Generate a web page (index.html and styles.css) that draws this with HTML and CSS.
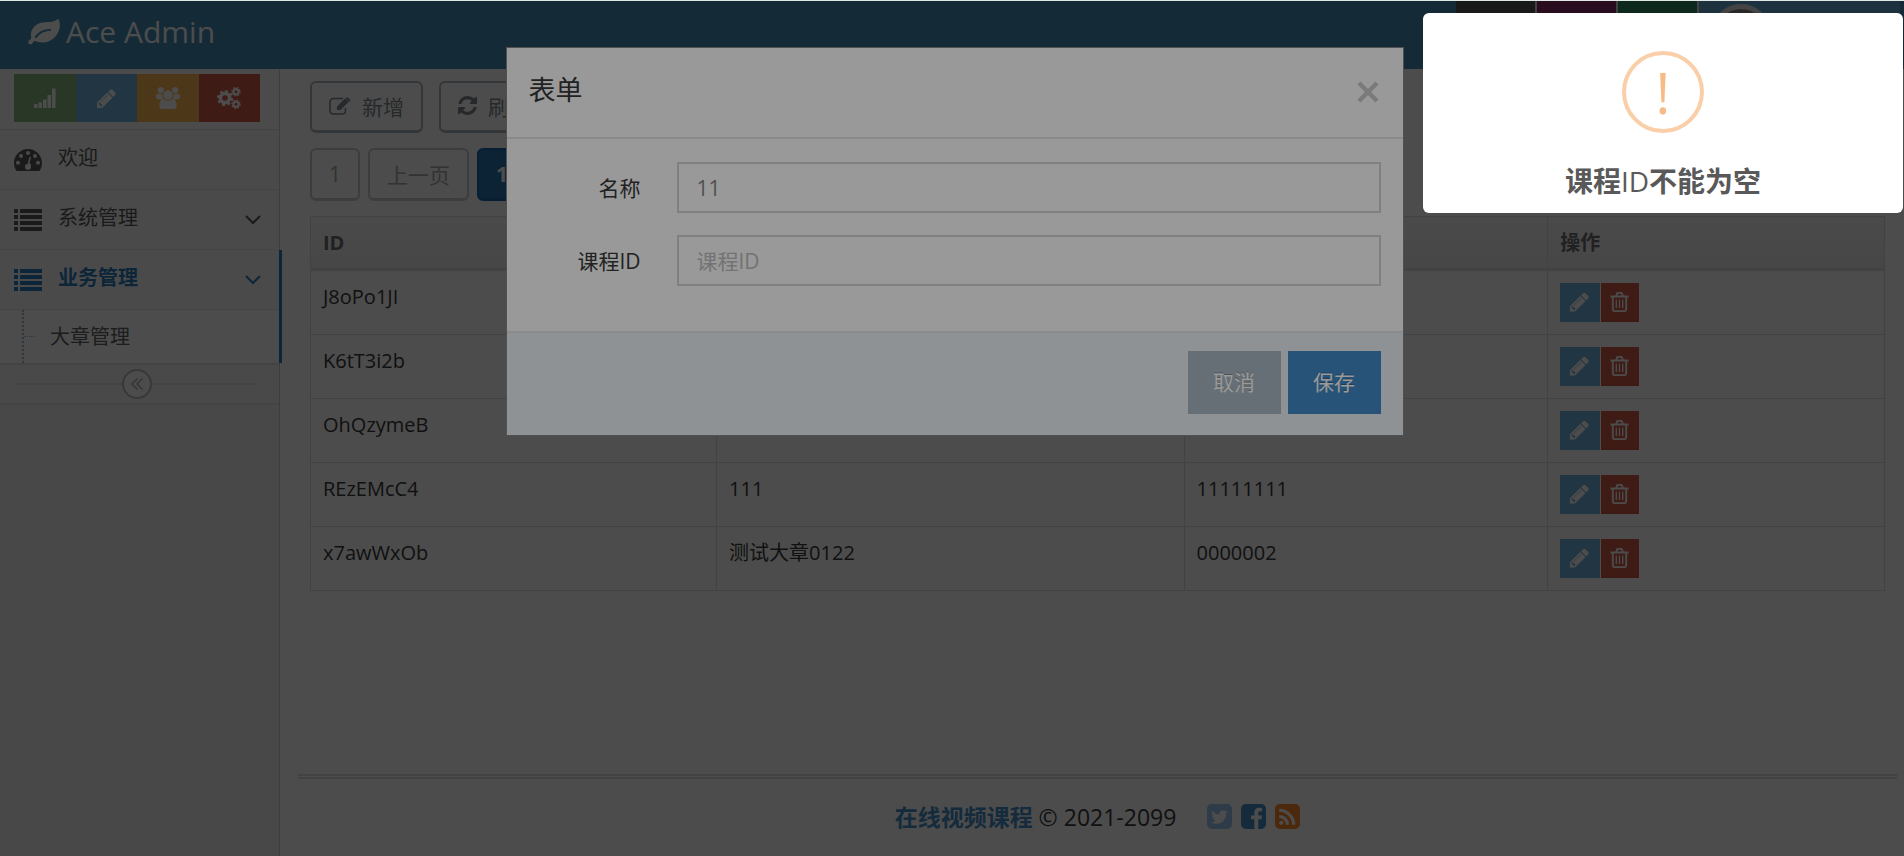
FILE: index.html
```html
<!DOCTYPE html>
<html lang="zh-CN">
<head>
  <meta charset="utf-8">
  <title>Ace Admin</title>
  <link rel="stylesheet" href="styles.css">
</head>
<body>
  <!-- 图标库 -->
  <svg class="sprite" aria-hidden="true">
    <symbol id="i-leaf" viewBox="0 0 32 26">
      <path fill="currentColor" fill-rule="evenodd" d="M30.500 0.300C31.300 1 32 4 31.800 7C31.200 16 24 23.700 14 23.500C10.500 23.500 8.500 22.300 6.500 22C5 22.500 4.500 25.500 2.500 25.500C1 25.500 0 24 0.200 23C0.500 21 3.500 20.500 3.300 18.500C1.500 12 6 5.500 13 3.700C18 2.500 23 3.700 27 1.700C28.500 1 29.500-0.300 30.500 0.300ZM22 10C15 10 11 13 7 17.300C6.300 18.300 7.500 19.500 8.500 18.700C13 14 16 12.200 22 12.100C23.400 12 23.400 10.100 22 10Z"/>
    </symbol>
    <symbol id="i-signal" viewBox="0 0 24 22">
      <path fill="currentColor" d="M1 17h3.500v4H1zM5.500 15.500H9V21H5.500zM10 12.500h3.500V21H10zM14.500 8H18v13h-3.500zM19 1.500h3.500V21H19z"/>
    </symbol>
    <symbol id="i-pencil" viewBox="0 0 1536 1536">
      <path fill="currentColor" transform="translate(0 1408) scale(1 -1)" d="M363 0l91 91l-235 235l-91 -91v-107h128v-128h107zM886 928q0 22 -22 22q-10 0 -17 -7l-542 -542q-7 -7 -7 -17q0 -22 22 -22q10 0 17 7l542 542q7 7 7 17zM832 1120l416 -416l-832 -832h-416v416zM1515 1024q0 -53 -37 -90l-166 -166l-416 416l166 165q36 38 90 38q53 0 91 -38l235 -234q37 -39 37 -91z"/>
    </symbol>
    <symbol id="i-group" viewBox="0 0 24 22">
      <g fill="currentColor">
        <circle cx="4.800" cy="3.200" r="3.100"/><circle cx="19.200" cy="3.200" r="3.100"/><circle cx="12" cy="8" r="4.700"/>
        <path d="M2 6.700c2 .9 3.300.8 4.500.4c-.3 2 .2 4 1.500 5.400H4C1.500 12.500 0 11.500 0 9.800C0 8 .8 6.500 2 6.700zM22 6.700c-2 .9-3.300.8-4.500.4c.3 2-.2 4-1.500 5.400h4c2.500 0 4-1 4-2.700c0-1.800-.8-3.300-2-3.100z"/>
        <path d="M7.500 12c3 2.300 6 2.300 9 0c3.500 0 4.200 4 4.200 7c0 2-1.200 3-3.200 3h-11c-2 0-3.200-1-3.200-3c0-3 .7-7 4.200-7z"/>
      </g>
    </symbol>
    <symbol id="i-cogs" viewBox="0 0 24 22">
      <g fill="none" stroke="currentColor">
        <circle cx="8" cy="11" r="4.600" stroke-width="3.600"/>
        <circle cx="8" cy="11" r="7.100" stroke-width="2" stroke-dasharray="2.800 2.776"/>
        <circle cx="19" cy="4.700" r="2.600" stroke-width="2.200"/>
        <circle cx="19" cy="4.700" r="4.100" stroke-width="1.300" stroke-dasharray="1.600 1.620"/>
        <circle cx="19" cy="17.300" r="2.600" stroke-width="2.200"/>
        <circle cx="19" cy="17.300" r="4.100" stroke-width="1.300" stroke-dasharray="1.600 1.620"/>
      </g>
    </symbol>
    <symbol id="i-dashboard" viewBox="0 0 28 22">
      <path fill="currentColor" fill-rule="evenodd" d="M14 0C6.300 0 0 6.300 0 14c0 2.700.8 5.300 2.200 7.500c.2.300.5.500.8.500h22c.3 0 .6-.2.800-.5C27.200 19.300 28 16.700 28 14C28 6.300 21.700 0 14 0zM14 2a2 2 0 1 1 0 4a2 2 0 0 1 0-4zM7 4.900a2 2 0 1 1 0 4a2 2 0 0 1 0-4zM4 11.800a2 2 0 1 1 0 4a2 2 0 0 1 0-4zM24 11.800a2 2 0 1 1 0 4a2 2 0 0 1 0-4zM21 4.900a2 2 0 1 1 0 4a2 2 0 0 1 0-4zM16.200 7.600c.5.100.8.600.7 1.100l-1.300 5.200c1.100.7 1.700 2 1.300 3.300a3 3 0 1 1-3.200-2.300l1.300-5.700c.1-.5.600-.8 1.200-1.600z"/>
    </symbol>
    <symbol id="i-list" viewBox="0 0 28 22">
      <path fill="currentColor" d="M0 0h4v4H0zM6 0h22v4H6zM0 6h4v4H0zM6 6h22v4H6zM0 12h4v4H0zM6 12h22v4H6zM0 18h4v4H0zM6 18h22v4H6z"/>
    </symbol>
    <symbol id="i-down" viewBox="0 0 16 10">
      <path fill="none" stroke="currentColor" stroke-width="2" d="M1 1l7 7l7-7"/>
    </symbol>
    <symbol id="i-left" viewBox="0 0 12 12">
      <path fill="none" stroke="currentColor" stroke-width="1.400" d="M6.500.5L1 6l5.500 5.500M11.500.5L6 6l5.500 5.500"/>
    </symbol>
    <symbol id="i-edit" viewBox="0 0 22 18">
      <path fill="none" stroke="currentColor" stroke-width="1.600" d="M14 1.500H4.500C2.500 1.500 1 3 1 5v8.500C1 15.500 2.500 17 4.500 17H13c2 0 3.500-1.500 3.500-3.500V11"/>
      <path fill="currentColor" d="M8 9.500L16 1.500l3.500 3.500l-8 8H8zM17 .7c.7-.7 1.500-.7 2.200 0l1.500 1.500c.7.700.7 1.500 0 2.200l-.7.600L16.500 1.300z"/>
    </symbol>
    <symbol id="i-refresh" viewBox="0 0 1536 1536">
      <path fill="currentColor" transform="translate(0 1408) scale(1 -1)" d="M1511 480q0 -5 -1 -7q-64 -268 -268 -434.500t-478 -166.500q-146 0 -282.500 55t-243.500 157l-129 -129q-19 -19 -45 -19t-45 19t-19 45v448q0 26 19 45t45 19h448q26 0 45 -19t19 -45t-19 -45l-137 -137q71 -66 161 -102t187 -36q134 0 250 65t186 179q11 17 53 117q8 23 30 23h192q13 0 22.500 -9.500t9.500 -22.500zM1536 1280v-448q0 -26 -19 -45t-45 -19h-448q-26 0 -45 19t-19 45t19 45l138 138q-148 137 -349 137q-134 0 -250 -65t-186 -179q-11 -17 -53 -117q-8 -23 -30 -23h-199q-13 0 -22.500 9.500t-9.500 22.500v7q65 268 270 434.500t480 166.500q146 0 284 -55.500t245 -156.500l130 129q19 19 45 19t45 -19t19 -45z"/>
    </symbol>
    <symbol id="i-trash" viewBox="0 0 18 20">
      <path fill="none" stroke="currentColor" stroke-width="1.800" d="M0 4.500h18M2.300 4.500V17c0 1.300.7 2.100 1.700 2.100h10c1 0 1.700-.8 1.700-2.100V4.500M5.500 4.500L6.500 1.600c.1-.4.400-.7.800-.7h3.400c.4 0 .7.300.8.700l1 2.900"/>
      <path fill="none" stroke="currentColor" stroke-width="1.300" d="M5.800 7.500v8.500M9 7.500v8.500M12.200 7.500v8.500"/>
    </symbol>
    <symbol id="i-close" viewBox="0 0 22 22">
      <path fill="none" stroke="currentColor" stroke-width="4.500" d="M2 2l18 18M20 2L2 20"/>
    </symbol>
    <symbol id="i-twitter" viewBox="0 0 1536 1536">
      <path fill="currentColor" transform="translate(0 1408) scale(1 -1)" d="M1280 926q-56 -25 -121 -34q68 40 93 117q-65 -38 -134 -51q-61 66 -153 66q-87 0 -148.500 -61.500t-61.500 -148.500q0 -29 5 -48q-129 7 -242 65t-192 155q-29 -50 -29 -106q0 -114 91 -175q-47 1 -100 26v-2q0 -75 50 -133.500t123 -72.500q-29 -8 -51 -8q-13 0 -39 4q21 -63 74.500 -104t121.500 -42q-116 -90 -261 -90q-26 0 -50 3q148 -94 322 -94q112 0 210 35.500t168 95t120.500 137t75 162t24.500 168.500q0 18 -1 27q63 45 105 109zM1536 1120v-960q0 -119 -84.500 -203.500t-203.500 -84.500h-960q-119 0 -203.500 84.500t-84.500 203.500v960q0 119 84.500 203.500t203.500 84.500h960q119 0 203.500 -84.500t84.500 -203.500z"/>
    </symbol>
    <symbol id="i-facebook" viewBox="0 0 1536 1536">
      <path fill="currentColor" transform="translate(0 1408) scale(1 -1)" d="M1248 1408q119 0 203.500 -84.500t84.500 -203.500v-960q0 -119 -84.500 -203.500t-203.500 -84.500h-188v595h199l30 232h-229v148q0 56 23.500 84t91.500 28l122 1v207q-63 9 -178 9q-136 0 -217.500 -80t-81.500 -226v-171h-200v-232h200v-595h-532q-119 0 -203.500 84.500t-84.500 203.500v960q0 119 84.500 203.500t203.500 84.500h960z"/>
    </symbol>
    <symbol id="i-rss" viewBox="0 0 1536 1536">
      <path fill="currentColor" transform="translate(0 1408) scale(1 -1)" d="M512 256q0 53 -37.500 90.500t-90.500 37.500t-90.500 -37.500t-37.500 -90.500t37.500 -90.500t90.500 -37.500t90.500 37.500t37.500 90.500zM863 162q-13 232 -177 396t-396 177q-14 1 -24 -9t-10 -23v-128q0 -13 8.500 -22t21.500 -10q154 -11 264 -121t121 -264q1 -13 10 -21.500t22 -8.500h128q13 0 23 10t9 24zM1247 161q-5 154 -56 297.500t-139.500 260t-205 205t-260 139.500t-297.500 56q-14 1 -23 -9q-10 -10 -10 -23v-128q0 -13 9 -22t22 -10q204 -7 378 -111.500t278.500 -278.500t111.500 -378q1 -13 10 -22t22 -9h128q13 0 23 10q11 9 9 23zM1536 1120v-960q0 -119 -84.500 -203.500t-203.500 -84.500h-960q-119 0 -203.500 84.500t-84.500 203.500v960q0 119 84.500 203.500t203.500 84.500h960q119 0 203.500 -84.500t84.500 -203.500z"/>
    </symbol>
  </svg>

  <div class="page">
    <header class="navbar">
      <a class="navbar-brand" href="#"><svg class="icon-leaf"><use href="#i-leaf"/></svg>Ace Admin</a>
      <ul class="ace-nav">
        <li class="grey"></li>
        <li class="purple"></li>
        <li class="green"></li>
        <li class="light-blue"><span class="nav-user-photo"></span></li>
      </ul>
    </header>

    <div class="main-container">
      <aside class="sidebar">
        <div class="shortcuts">
          <button class="btn-success" type="button" aria-label="signal"><svg class="icon-m"><use href="#i-signal"/></svg></button>
          <button class="btn-info" type="button" aria-label="pencil"><svg class="icon-s"><use href="#i-pencil"/></svg></button>
          <button class="btn-warning" type="button" aria-label="users"><svg class="icon-m"><use href="#i-group"/></svg></button>
          <button class="btn-danger" type="button" aria-label="cogs"><svg class="icon-m"><use href="#i-cogs"/></svg></button>
        </div>
        <nav>
          <ul class="nav-list">
            <li><a href="#"><svg class="menu-icon"><use href="#i-dashboard"/></svg><span>欢迎</span></a></li>
            <li><a href="#"><svg class="menu-icon"><use href="#i-list"/></svg><span>系统管理</span><svg class="arrow"><use href="#i-down"/></svg></a></li>
            <li class="active">
              <a href="#"><svg class="menu-icon"><use href="#i-list"/></svg><span>业务管理</span><svg class="arrow"><use href="#i-down"/></svg></a>
              <ul class="submenu">
                <li><a href="#">大章管理</a></li>
              </ul>
            </li>
          </ul>
        </nav>
        <div class="sidebar-toggle">
          <button type="button" aria-label="toggle"><svg><use href="#i-left"/></svg></button>
        </div>
      </aside>

      <div class="main-content">
        <main class="page-content">
          <div class="toolbar">
            <button class="btn-white" type="button"><svg class="icon-edit"><use href="#i-edit"/></svg>新增</button>
            <button class="btn-white" type="button"><svg class="icon-s"><use href="#i-refresh"/></svg>刷新</button>
          </div>
          <div class="pagination">
            <button type="button" disabled>1</button>
            <button type="button" disabled>上一页</button>
            <button class="current" type="button">1</button>
          </div>
          <table class="table">
            <thead>
              <tr><th class="col-id">ID</th><th class="col-name">名称</th><th class="col-course">课程ID</th><th>操作</th></tr>
            </thead>
            <tbody>
              <tr>
                <td>J8oPo1JI</td><td></td><td></td>
                <td><div class="actions"><button class="btn-info" type="button" aria-label="edit"><svg><use href="#i-pencil"/></svg></button><button class="btn-danger" type="button" aria-label="delete"><svg><use href="#i-trash"/></svg></button></div></td>
              </tr>
              <tr>
                <td>K6tT3i2b</td><td></td><td></td>
                <td><div class="actions"><button class="btn-info" type="button" aria-label="edit"><svg><use href="#i-pencil"/></svg></button><button class="btn-danger" type="button" aria-label="delete"><svg><use href="#i-trash"/></svg></button></div></td>
              </tr>
              <tr>
                <td>OhQzymeB</td><td></td><td></td>
                <td><div class="actions"><button class="btn-info" type="button" aria-label="edit"><svg><use href="#i-pencil"/></svg></button><button class="btn-danger" type="button" aria-label="delete"><svg><use href="#i-trash"/></svg></button></div></td>
              </tr>
              <tr>
                <td>REzEMcC4</td><td>111</td><td>11111111</td>
                <td><div class="actions"><button class="btn-info" type="button" aria-label="edit"><svg><use href="#i-pencil"/></svg></button><button class="btn-danger" type="button" aria-label="delete"><svg><use href="#i-trash"/></svg></button></div></td>
              </tr>
              <tr>
                <td>x7awWxOb</td><td>测试大章0122</td><td>0000002</td>
                <td><div class="actions"><button class="btn-info" type="button" aria-label="edit"><svg><use href="#i-pencil"/></svg></button><button class="btn-danger" type="button" aria-label="delete"><svg><use href="#i-trash"/></svg></button></div></td>
              </tr>
            </tbody>
          </table>
        </main>

        <footer class="footer">
          <span><b>在线视频课程</b> © 2021-2099</span>
          <span class="social">
            <a class="twitter" href="#" aria-label="Twitter"><svg><use href="#i-twitter"/></svg></a>
            <a class="facebook" href="#" aria-label="Facebook"><svg><use href="#i-facebook"/></svg></a>
            <a class="rss" href="#" aria-label="RSS"><svg><use href="#i-rss"/></svg></a>
          </span>
        </footer>
      </div>
    </div>
  </div>

  <!-- 表单弹窗 -->
  <div class="modal-backdrop">
    <form class="modal" role="dialog" aria-labelledby="modal-title">
      <div class="modal-header">
        <h4 id="modal-title">表单</h4>
        <button class="close" type="button" aria-label="Close"><svg><use href="#i-close"/></svg></button>
      </div>
      <div class="modal-body">
        <div class="form-group">
          <label for="name">名称</label>
          <input id="name" type="text" placeholder="名称" value="11">
        </div>
        <div class="form-group">
          <label for="courseId">课程ID</label>
          <input id="courseId" type="text" placeholder="课程ID">
        </div>
      </div>
      <div class="modal-footer">
        <button class="btn-default" type="button">取消</button>
        <button class="btn-primary" type="button">保存</button>
      </div>
    </form>
  </div>

  <!-- 校验提示 -->
  <div class="swal-overlay">
    <div class="swal-popup" role="alert">
      <div class="swal-icon">!</div>
      <h2>课程<span>ID</span>不能为空</h2>
    </div>
  </div>
</body>
</html>
```
FILE: styles.css
```css
* {
  box-sizing: border-box;
}

body {
  margin: 0;
  font-family: "Open Sans", "Noto Sans CJK SC", sans-serif;
  font-size: 20px;
  line-height: 30px;
  color: #393939;
  background-color: #fff;
}

ul {
  margin: 0;
  padding: 0;
  list-style: none;
}

a {
  color: inherit;
  text-decoration: none;
}

button,
input {
  font-family: inherit;
  font-size: inherit;
}

button {
  display: flex;
  align-items: center;
  justify-content: center;
  padding: 0;
  border: 0;
  color: #fff;
  cursor: pointer;
}

svg {
  flex: none;
}

.sprite {
  display: none;
}

.page {
  display: flex;
  flex-direction: column;
  min-height: 100vh;
  border-top: 1px solid #dfe8e4;
}

.icon-s {
  width: 19px;
  height: 19px;
}

.icon-m {
  width: 24px;
  height: 22px;
}

.btn-success { background-color: #87b87f; }
.btn-info { background-color: #6fb3e0; }
.btn-warning { background-color: #ffb752; }
.btn-danger { background-color: #d15b47; }
.btn-default { background-color: #abbac3; }
.btn-primary { background-color: #428bca; }

/* navbar */
.navbar {
  display: flex;
  justify-content: space-between;
  height: 68px;
  background-color: #438eb9;
}

.navbar-brand {
  display: flex;
  align-items: center;
  gap: 6px;
  padding-left: 28px;
  padding-bottom: 6px;
  font-size: 30px;
  color: #fff;
}

.icon-leaf {
  width: 32px;
  height: 26px;
}

.ace-nav {
  display: flex;
  padding-right: 4px;
}

.ace-nav li {
  width: 81px;
  border-right: 2px solid #ddd;
}

.ace-nav .grey { background-color: #555; }
.ace-nav .purple { background-color: #892e65; }
.ace-nav .green { background-color: #2e8965; }

.ace-nav .light-blue {
  width: 201px;
  padding: 3px 12px;
  border-right: 0;
  background-color: #62a8d1;
}

.nav-user-photo {
  display: block;
  width: 60px;
  height: 60px;
  border: 5px solid #e5e5e5;
  border-radius: 50%;
  background-color: #888;
}

.main-container {
  display: flex;
  flex: 1;
}

/* sidebar */
.sidebar {
  width: 280px;
  flex: none;
  border-right: 1px solid #ccc;
  background-color: #f2f2f2;
}

.shortcuts {
  display: flex;
  height: 61px;
  padding: 5px 19px 7px 14px;
  border-bottom: 1px solid #ddd;
  background-color: #fafafa;
}

.shortcuts button {
  flex: 1;
}

.nav-list > li {
  border-bottom: 1px solid #e5e5e5;
  background-color: #f8f8f8;
}

.nav-list > li > a {
  display: flex;
  align-items: center;
  height: 59px;
  padding: 0 18px 0 14px;
  color: #585858;
}

.nav-list > li > a > span {
  padding-bottom: 3px;
}

.menu-icon {
  width: 28px;
  height: 22px;
  margin-right: 16px;
}

.arrow {
  width: 16px;
  height: 10px;
  margin-left: auto;
}

.nav-list > .active {
  margin-right: -3px;
  border-right: 3px solid #2b7dbc;
  border-bottom: 0;
}

.nav-list > .active > a {
  font-weight: bold;
  color: #2b7dbc;
}

.submenu {
  border-top: 1px solid #e5e5e5;
  background-color: #fff;
}

.submenu li {
  display: flex;
  align-items: center;
  margin-left: 22px;
  height: 53px;
  border-left: 2px dotted #9dbdd6;
}

.submenu li::before {
  content: "";
  width: 12px;
  border-top: 1px dotted #9dbdd6;
}

.submenu a {
  padding-left: 14px;
  color: #616161;
}

.sidebar-toggle {
  display: flex;
  align-items: center;
  justify-content: center;
  height: 42px;
  padding: 0 23px 0 18px;
  border-top: 2px solid #e0e0e0;
  border-bottom: 2px solid #e0e0e0;
  background-color: #f3f3f3;
}

.sidebar-toggle::before,
.sidebar-toggle::after {
  content: "";
  flex: 1;
  height: 2px;
  background-color: #e0e0e0;
}

.sidebar-toggle button {
  width: 30px;
  height: 30px;
  border: 2px solid #bbb;
  border-radius: 50%;
  color: #aaa;
  background-color: #fff;
}

.sidebar-toggle svg {
  width: 12px;
  height: 12px;
}

/* content */
.main-content {
  display: flex;
  flex: 1;
  flex-direction: column;
}

.page-content {
  flex: 1;
  padding: 12px 19px 24px 30px;
}

.toolbar {
  display: flex;
  gap: 16px;
}

.btn-white {
  gap: 11px;
  height: 52px;
  padding: 0 17px 2px;
  border: 2px solid #abbac3;
  border-bottom-width: 3px;
  border-radius: 6px;
  font-size: 21px;
  color: #80898f;
  background-color: #fff;
}

.icon-edit {
  width: 22px;
  height: 18px;
}

.pagination {
  display: flex;
  gap: 8px;
  margin: 15px 0;
}

.pagination button {
  height: 53px;
  padding: 0 17px;
  border: 2px solid #ccc;
  border-bottom-width: 3px;
  border-radius: 6px;
  font-size: 21px;
  color: #aaa;
  background-color: #fff;
}

.pagination .current {
  border-color: #1b6aaa;
  font-weight: bold;
  color: #fff;
  background-color: #2a75b3;
}

.table {
  width: 100%;
  table-layout: fixed;
  border-collapse: collapse;
}

.table th,
.table td {
  padding: 12px;
  border: 1px solid #ddd;
  text-align: left;
  vertical-align: top;
}

.table th {
  padding: 11px 12px 10px;
  border-bottom: 3px solid #ddd;
  color: #707070;
  background-image: linear-gradient(#f8f8f8, #ececec);
}

.table td {
  height: 64px;
}

.col-id { width: 25.8%; }
.col-name { width: 29.7%; }
.col-course { width: 23.1%; }

.table td:not(:last-child) {
  padding-top: 11px;
}

.actions {
  display: flex;
  gap: 1px;
}

.actions button {
  width: 40px;
  height: 39px;
  padding: 0 2px 2px 0;
}

.actions .btn-danger {
  width: 38px;
}

.actions svg {
  width: 19px;
  height: 20px;
}

.footer {
  display: flex;
  align-items: center;
  justify-content: center;
  gap: 31px;
  height: 82px;
  padding-bottom: 2px;
  margin: 0 7px 0 18px;
  border-top: 5px double #ddd;
  font-size: 23px;
}

.footer b {
  color: #478fca;
}

.social {
  display: flex;
  gap: 9px;
}

.social svg {
  display: block;
  width: 25px;
  height: 25px;
}

.twitter { color: #9bc6f0; }
.facebook { color: #478fca; }
.rss { color: #ff892a; }

/* modal */
.modal-backdrop {
  position: fixed;
  inset: 1px 0 0;
  padding: 46px 0 0 5px;
  background-color: rgba(0, 0, 0, 0.5);
}

.modal {
  width: 898px;
  margin: 0 auto;
  border: 1px solid #888;
  background-color: #fff;
}

.modal-header {
  display: flex;
  align-items: center;
  justify-content: space-between;
  height: 91px;
  padding: 0 24px 2px 22px;
  border-bottom: 2px solid #e5e5e5;
}

.modal-header h4 {
  margin: 0 0 4px;
  font-size: 27px;
  font-weight: normal;
}

.close {
  color: #ccc;
  background: none;
}

.close svg {
  width: 22px;
  height: 22px;
}

.modal-body {
  display: flex;
  flex-direction: column;
  gap: 22px;
  padding: 23px 22px 45px;
  font-size: 21px;
}

.form-group {
  display: flex;
  align-items: center;
  gap: 36px;
}

.form-group label {
  width: 112px;
  text-align: right;
}

.form-group input {
  flex: 1;
  height: 51px;
  padding: 0 18px;
  border: 2px solid #d5d5d5;
  color: #858585;
  background-color: #fff;
}

.form-group input::placeholder {
  color: #c0c0c0;
}

.modal-footer {
  display: flex;
  justify-content: flex-end;
  gap: 7px;
  padding: 18px 22px 21px;
  border-top: 2px solid #e4e9ee;
  background-color: #eff3f8;
}

.modal-footer button {
  width: 93px;
  height: 63px;
  padding-bottom: 3px;
  font-size: 21px;
  text-shadow: 0 -1px 0 rgba(0, 0, 0, 0.25);
}

/* alert */
.swal-overlay {
  position: fixed;
  inset: 1px 0 0;
  display: flex;
  align-items: flex-start;
  justify-content: flex-end;
  padding: 12px 1px;
  background-color: rgba(0, 0, 0, 0.4);
}

.swal-popup {
  width: 480px;
  padding: 38px 15px 16px;
  border-radius: 6px;
  background-color: #fff;
  text-align: center;
}

.swal-icon {
  width: 82px;
  height: 82px;
  margin: 0 auto 32px;
  border: 4px solid #facea8;
  border-radius: 50%;
  font-size: 56px;
  line-height: 74px;
  color: #f8bb86;
}

.swal-popup h2 {
  margin: 0;
  font-size: 28px;
  line-height: 32px;
  color: #595959;
}

.swal-popup h2 span {
  font-weight: normal;
}
```
